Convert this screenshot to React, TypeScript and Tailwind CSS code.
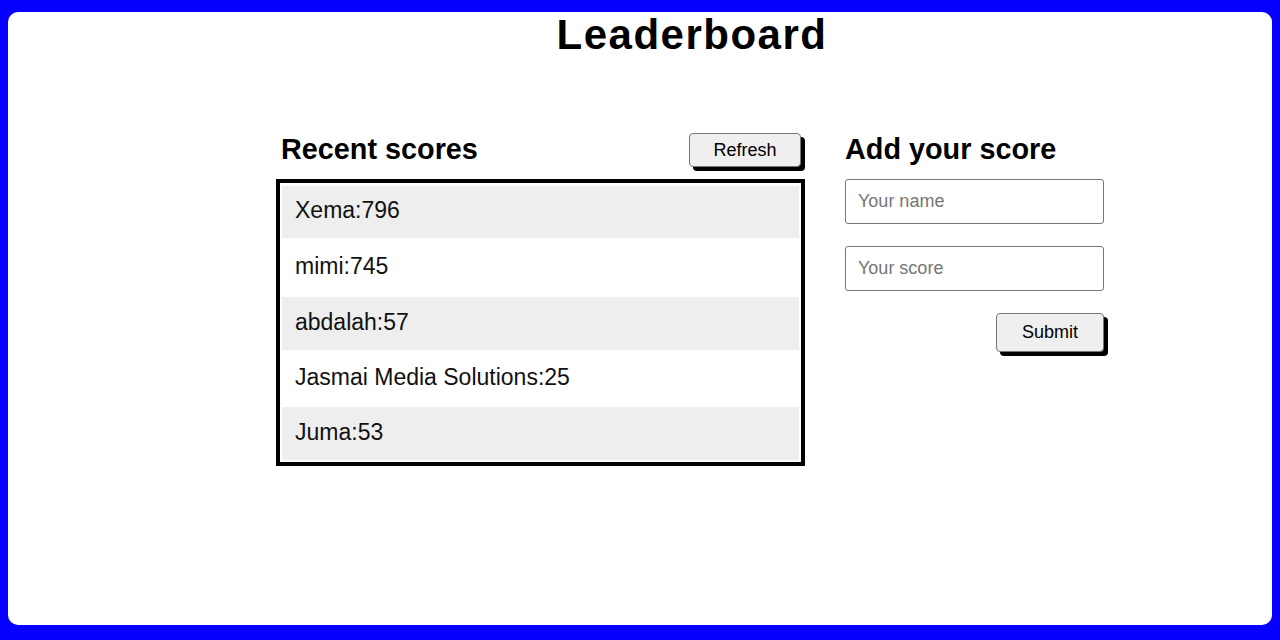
import React from "react";

const scores = [
  { name: "Xema", score: 796, h: "h-[52px]", bg: "bg-[#eeeeee]" },
  { name: "mimi", score: 745, h: "h-[59px]", bg: "bg-white" },
  { name: "abdalah", score: 57, h: "h-[53px]", bg: "bg-[#eeeeee]" },
  { name: "Jasmai Media Solutions", score: 25, h: "h-[57px]", bg: "bg-white" },
  { name: "Juma", score: 53, h: "h-[53px]", bg: "bg-[#eeeeee]" },
];

export default function App() {
  return (
    <div
      className="h-[640px] bg-[#0800ff] pt-[12px] px-2 pb-[15px]"
      style={{ fontFamily: '"Liberation Sans", Arial, sans-serif' }}
    >
      <div className="h-full bg-white rounded-[10px]">
        <h1 className="ml-[268px] w-[832px] text-center text-[42px] leading-[46px] font-bold tracking-[1.5px] text-black">
          Leaderboard
        </h1>
        <div className="mt-[75px] ml-[268px] flex gap-[40px]">
          <section className="w-[529px] flex flex-col">
            <div className="h-[34px] flex items-center justify-between pl-[5px] pr-[4px]">
              <h2 className="text-[28.8px] font-bold text-black">Recent scores</h2>
              <button className="w-[112px] h-[34px] bg-[#efefef] border border-[#767676] rounded-[4px] shadow-[4px_4px_0_#000] text-[18px] text-black">
                Refresh
              </button>
            </div>
            <ul className="mt-[12px] border-[4px] border-black pt-[3px] pb-[2px] px-[2px]">
              {scores.map((s) => (
                <li
                  key={s.name}
                  className={`${s.h} ${s.bg} flex items-center pl-[13px] pb-[3px] text-[23px] text-[#111]`}
                >
                  {s.name}:{s.score}
                </li>
              ))}
            </ul>
          </section>
          <section className="w-[263px] flex flex-col">
            <div className="h-[34px] flex items-center">
              <h2 className="text-[28.8px] font-bold text-black">Add your score</h2>
            </div>
            <input
              className="mt-[12px] w-[259px] h-[45px] border border-[#767676] rounded-[3px] px-[12px] text-[18px] placeholder:text-[#757575] outline-none"
              placeholder="Your name"
            />
            <input
              className="mt-[22px] w-[259px] h-[45px] border border-[#767676] rounded-[3px] px-[12px] text-[18px] placeholder:text-[#757575] outline-none"
              placeholder="Your score"
            />
            <div className="mt-[22px] w-[259px] flex justify-end">
              <button className="w-[108px] h-[39px] bg-[#efefef] border border-[#767676] rounded-[4px] shadow-[4px_4px_0_#000] text-[18px] text-black">
                Submit
              </button>
            </div>
          </section>
        </div>
      </div>
    </div>
  );
}
